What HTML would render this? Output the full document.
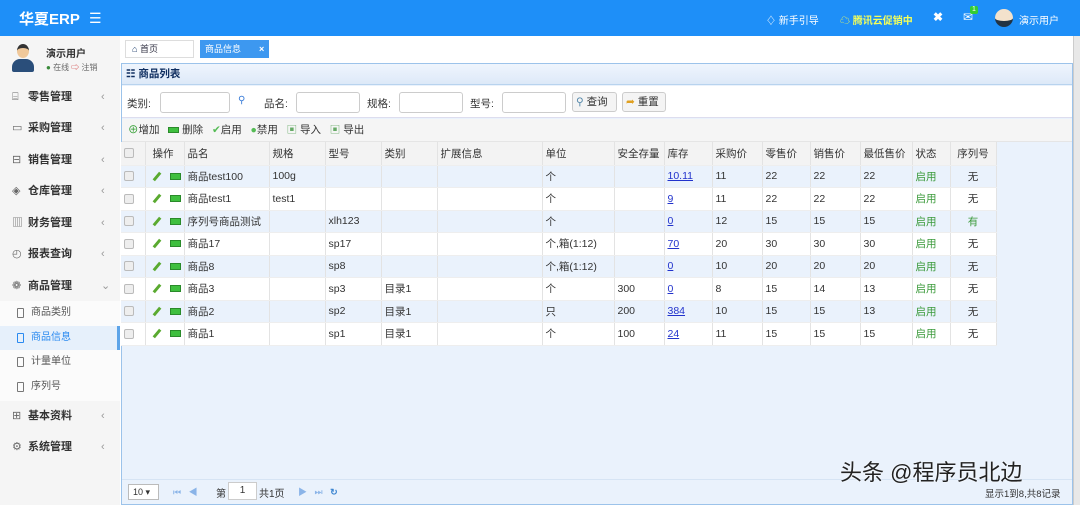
<!DOCTYPE html>
<html><head><meta charset="utf-8"><style>
*{margin:0;padding:0;box-sizing:border-box}
body{width:1080px;height:505px;overflow:hidden;font-family:"Liberation Sans","Noto Sans CJK SC",sans-serif;font-size:11px;color:#333;background:#fff;position:relative}
.hdr{position:absolute;left:0;top:0;width:1080px;height:36px;background:#1e8ff8;color:#fff}
.abs{position:absolute;white-space:nowrap}
.side{position:absolute;left:0;top:36px;width:120px;height:469px;background:#f5f5f5}
.mi{position:absolute;left:0;width:120px;height:20px;line-height:20px;font-size:11px;font-weight:bold;color:#333}
.mi .ic{position:absolute;left:12px;top:0;color:#666;font-weight:normal}
.mi .t{position:absolute;left:28px;top:0}
.mi .ar{position:absolute;left:101px;top:0;color:#999;font-weight:normal}
.sub{position:absolute;left:0;width:120px;height:24px;line-height:24px;font-size:10px;color:#555}
.sub .b{position:absolute;left:17px;top:7px;width:7px;height:10px;border:1px solid #777;border-radius:1px}
.sub .t{position:absolute;left:31px}
.panel{position:absolute;left:121px;top:63px;width:952px;height:442px;border:1px solid #9cc3ea;background:#eaf2fc}
table{border-collapse:collapse;position:absolute;left:121px;top:142px;font-size:10.5px}
td{height:22.5px;border-right:1px solid #e3e3e3;border-bottom:1px solid #eee;padding:0 3px;white-space:nowrap}
tr.h td{background:#f3f3f3;height:23px}
tr.o td{background:#eaf2fc}
tr.e td{background:#fff}
.cb{display:inline-block;width:10px;height:10px;border:1px solid #bbb;border-radius:2px;background:#eee;vertical-align:middle}
.lk{color:#2233cc;text-decoration:underline}
.g{color:#3a9a3a}
.pen{display:inline-block;width:10px;height:3px;background:#5aaa30;transform:rotate(-50deg);vertical-align:middle;margin-left:3px}
.del{display:inline-block;width:11px;height:7px;border:1px solid #2a8a2a;background:#3fbf3f;vertical-align:middle;margin-left:8px}
.inp{position:absolute;height:21px;border:1px solid #ccc;border-radius:3px;background:#fff}
.btn{position:absolute;height:20px;border:1px solid #ccc;border-radius:3px;background:#f4f4f4;font-size:10.5px;line-height:18px;padding-left:3px}
</style></head><body>
<div class="hdr">
<div class="abs" style="left:19px;top:8px;font-size:15px;font-weight:bold">华夏ERP</div>
<div class="abs" style="left:89px;top:10px;font-size:14px;line-height:16px">☰</div>
<div class="abs" style="left:766px;top:12px;font-size:10px">♢ 新手引导</div>
<div class="abs" style="left:840px;top:12px;font-size:10px;font-weight:bold;color:#f4ff5a">☁ 腾讯云促销中</div>
<div class="abs" style="left:933px;top:10px;font-size:12px;font-weight:bold">✖</div>
<div class="abs" style="left:963px;top:10px;font-size:12px">✉</div>
<div class="abs" style="left:970px;top:6px;width:8px;height:8px;background:#3c3;font-size:7px;line-height:8px;text-align:center;border-radius:2px">1</div>
<div class="abs" style="left:995px;top:9px;width:18px;height:18px;border-radius:50%;background:#f3e2cc;border-bottom:6px solid #234"></div>
<div class="abs" style="left:1019px;top:12px;font-size:10px">演示用户</div>
</div>
<div class="side">
<div class="abs" style="left:12px;top:8px;width:22px;height:30px"><div style="position:absolute;left:5px;top:0;width:12px;height:14px;border-radius:50%;background:#f0c89a;border-top:4px solid #333"></div><div style="position:absolute;left:0;top:15px;width:22px;height:13px;border-radius:8px 8px 2px 2px;background:#2a4e7a"></div></div>
<div class="abs" style="left:46px;top:9px;font-size:10px;font-weight:bold">演示用户</div>
<div class="abs" style="left:46px;top:26px;font-size:8px;color:#666"><span style="color:#3a8a3a">●</span> 在线 <span style="color:#c33">⇨</span> 注销</div>
<div class="mi" style="top:51px"><span class="ic">⌸</span><span class="t">零售管理</span><span class="ar">‹</span></div>
<div class="mi" style="top:82px"><span class="ic">▭</span><span class="t">采购管理</span><span class="ar">‹</span></div>
<div class="mi" style="top:114px"><span class="ic">⊟</span><span class="t">销售管理</span><span class="ar">‹</span></div>
<div class="mi" style="top:145px"><span class="ic">◈</span><span class="t">仓库管理</span><span class="ar">‹</span></div>
<div class="mi" style="top:177px"><span class="ic">▥</span><span class="t">财务管理</span><span class="ar">‹</span></div>
<div class="mi" style="top:208px"><span class="ic">◴</span><span class="t">报表查询</span><span class="ar">‹</span></div>
<div class="mi" style="top:240px"><span class="ic">❁</span><span class="t">商品管理</span><span class="ar">⌄</span></div>
<div style="position:absolute;left:0;top:265px;width:120px;height:100px;background:#fbfbfb"></div>
<div class="sub" style="top:265px"><span class="b"></span><span class="t">商品类别</span></div>
<div class="sub" style="top:290px;background:#e6f0fb;color:#2a8af0;border-right:3px solid #5da4e8"><span class="b" style="border-color:#2a8af0"></span><span class="t">商品信息</span></div>
<div class="sub" style="top:314px"><span class="b"></span><span class="t">计量单位</span></div>
<div class="sub" style="top:339px"><span class="b"></span><span class="t">序列号</span></div>
<div class="mi" style="top:370px"><span class="ic">⊞</span><span class="t">基本资料</span><span class="ar">‹</span></div>
<div class="mi" style="top:401px"><span class="ic">⚙</span><span class="t">系统管理</span><span class="ar">‹</span></div>
</div>
<div class="abs" style="left:120px;top:36px;width:960px;height:27px;background:#fff"></div>
<div class="abs" style="left:125px;top:40px;width:69px;height:18px;border:1px solid #ddd;font-size:9px;line-height:16px;padding-left:6px;color:#334"><span style="color:#1a3a6a">⌂</span> 首页</div>
<div class="abs" style="left:200px;top:40px;width:69px;height:18px;background:#3d98f0;color:#fff;font-size:9px;line-height:18px;padding-left:5px">商品信息<span style="position:absolute;left:59px;font-weight:bold">×</span></div>
<div class="panel"></div>
<div class="abs" style="left:122px;top:64px;width:950px;height:21px;background:linear-gradient(#eff5fd,#dde9f8);border-bottom:1px solid #b8d3ee;font-size:10.5px;font-weight:bold;line-height:21px;padding-left:4px;color:#0e2d5f">☷ 商品列表</div>
<div class="abs" style="left:122px;top:86px;width:950px;height:32px;background:#fff;border-bottom:1px solid #dde"></div>
<div class="abs" style="left:127px;top:96px;font-size:10.5px">类别:</div><div class="inp" style="left:160px;top:92px;width:70px"></div>
<div class="abs" style="left:238px;top:95px;font-size:10px;color:#3b7dd8">⚲</div>
<div class="abs" style="left:264px;top:96px;font-size:10.5px">品名:</div><div class="inp" style="left:296px;top:92px;width:64px"></div>
<div class="abs" style="left:367px;top:96px;font-size:10.5px">规格:</div><div class="inp" style="left:399px;top:92px;width:64px"></div>
<div class="abs" style="left:470px;top:96px;font-size:10.5px">型号:</div><div class="inp" style="left:502px;top:92px;width:64px"></div>
<div class="btn" style="left:572px;top:92px;width:45px"><span style="color:#58a">⚲</span> 查询</div>
<div class="btn" style="left:622px;top:92px;width:44px"><span style="color:#e0a020">➦</span> 重置</div>
<div class="abs" style="left:122px;top:119px;width:950px;height:23px;background:#f5f5f5;border-bottom:1px solid #e5e5e5;font-size:10.5px;line-height:23px;padding-left:6px">
<span style="color:#2a9a2a">⊕</span>增加 &nbsp;&nbsp;<span class="del" style="margin-left:0;height:6px"></span> 删除 &nbsp; <span style="color:#5b5">✔</span>启用 &nbsp; <span style="color:#5b5">●</span>禁用 &nbsp; <span style="color:#6a6">▣</span> 导入 &nbsp; <span style="color:#6a6">▣</span> 导出</div>
<table>
<colgroup><col style="width:24px"><col style="width:38px"><col style="width:85px"><col style="width:56px"><col style="width:56px"><col style="width:56px"><col style="width:105px"><col style="width:72px"><col style="width:50px"><col style="width:48px"><col style="width:50px"><col style="width:48px"><col style="width:50px"><col style="width:52px"><col style="width:38px"><col style="width:46px"></colgroup>
<tr class="h"><td><span class="cb"></span></td><td style="padding-left:7px">操作</td><td>品名</td><td>规格</td><td>型号</td><td>类别</td><td>扩展信息</td><td>单位</td><td>安全存量</td><td>库存</td><td>采购价</td><td>零售价</td><td>销售价</td><td>最低售价</td><td>状态</td><td style="text-align:center">序列号</td></tr>
<tr class="o"><td><span class="cb"></span></td><td><span class="pen"></span><span class="del"></span></td><td>商品test100</td><td>100g</td><td></td><td></td><td></td><td>个</td><td></td><td><span class="lk">10.11</span></td><td>11</td><td>22</td><td>22</td><td>22</td><td class="g">启用</td><td style="text-align:center">无</td></tr>
<tr class="e"><td><span class="cb"></span></td><td><span class="pen"></span><span class="del"></span></td><td>商品test1</td><td>test1</td><td></td><td></td><td></td><td>个</td><td></td><td><span class="lk">9</span></td><td>11</td><td>22</td><td>22</td><td>22</td><td class="g">启用</td><td style="text-align:center">无</td></tr>
<tr class="o"><td><span class="cb"></span></td><td><span class="pen"></span><span class="del"></span></td><td>序列号商品测试</td><td></td><td>xlh123</td><td></td><td></td><td>个</td><td></td><td><span class="lk">0</span></td><td>12</td><td>15</td><td>15</td><td>15</td><td class="g">启用</td><td style="text-align:center" class="g">有</td></tr>
<tr class="e"><td><span class="cb"></span></td><td><span class="pen"></span><span class="del"></span></td><td>商品17</td><td></td><td>sp17</td><td></td><td></td><td>个,箱(1:12)</td><td></td><td><span class="lk">70</span></td><td>20</td><td>30</td><td>30</td><td>30</td><td class="g">启用</td><td style="text-align:center">无</td></tr>
<tr class="o"><td><span class="cb"></span></td><td><span class="pen"></span><span class="del"></span></td><td>商品8</td><td></td><td>sp8</td><td></td><td></td><td>个,箱(1:12)</td><td></td><td><span class="lk">0</span></td><td>10</td><td>20</td><td>20</td><td>20</td><td class="g">启用</td><td style="text-align:center">无</td></tr>
<tr class="e"><td><span class="cb"></span></td><td><span class="pen"></span><span class="del"></span></td><td>商品3</td><td></td><td>sp3</td><td>目录1</td><td></td><td>个</td><td>300</td><td><span class="lk">0</span></td><td>8</td><td>15</td><td>14</td><td>13</td><td class="g">启用</td><td style="text-align:center">无</td></tr>
<tr class="o"><td><span class="cb"></span></td><td><span class="pen"></span><span class="del"></span></td><td>商品2</td><td></td><td>sp2</td><td>目录1</td><td></td><td>只</td><td>200</td><td><span class="lk">384</span></td><td>10</td><td>15</td><td>15</td><td>13</td><td class="g">启用</td><td style="text-align:center">无</td></tr>
<tr class="e"><td><span class="cb"></span></td><td><span class="pen"></span><span class="del"></span></td><td>商品1</td><td></td><td>sp1</td><td>目录1</td><td></td><td>个</td><td>100</td><td><span class="lk">24</span></td><td>11</td><td>15</td><td>15</td><td>15</td><td class="g">启用</td><td style="text-align:center">无</td></tr>
</table>
<div class="abs" style="left:122px;top:479px;width:950px;height:25px;background:#eaf2fc;border-top:1px solid #d6e4f4"></div>
<div class="abs" style="left:128px;top:484px;width:31px;height:16px;border:1px solid #bbb;background:#fff;font-size:9px;line-height:14px;padding-left:4px">10 ▾</div>
<div class="abs" style="left:173px;top:485px;font-size:9px;color:#8ab4e8">⏮ &nbsp; ◀</div>
<div class="abs" style="left:216px;top:485px;font-size:10px">第</div>
<div class="abs" style="left:228px;top:482px;width:29px;height:18px;border:1px solid #ccc;background:#fff;font-size:10px;line-height:16px;text-align:center">1</div>
<div class="abs" style="left:259px;top:485px;font-size:10px">共1页</div>
<div class="abs" style="left:298px;top:485px;font-size:9px;color:#8ab4e8">▶ &nbsp; ⏭ &nbsp; <b style="color:#3b84d0">↻</b></div>
<div class="abs" style="left:840px;top:455px;font-size:22px;color:#222;text-shadow:0 0 2px #fff">头条 @程序员北边</div>
<div class="abs" style="left:985px;top:486px;font-size:9.5px;color:#333">显示1到8,共8记录</div>
<div class="abs" style="left:1073px;top:36px;width:7px;height:469px;background:#e8e8e8;border-left:1px solid #ccc"></div>
</body></html>
